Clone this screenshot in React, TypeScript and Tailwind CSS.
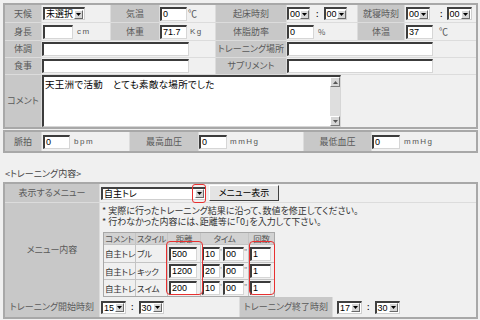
import React from "react";

const FONT = "font-['Noto_Sans_CJK_JP','Noto_Sans',sans-serif] [font-feature-settings:'palt']";

function Arrow() {
  return (
    <span className="w-[9px] h-[9px] bg-[#d6d6d6] border border-t-white border-l-white border-b-[#6a6a6a] border-r-[#6a6a6a] flex items-center justify-center shrink-0">
      <svg width="5" height="3" viewBox="0 0 5 3">
        <path d="M0 0H5L2.5 3Z" fill="#000" />
      </svg>
    </span>
  );
}

function Sel({ w, v, num = true }: { w: string; v: string; num?: boolean }) {
  return (
    <div className={`h-[13px] bg-white border-t-2 border-l-2 border-t-[#404040] border-l-[#404040] border-b border-r border-b-[#cfcfcf] border-r-[#cfcfcf] flex items-center pr-px shrink-0 ${w}`}>
      <span className={`flex-1 pl-px leading-[10px] text-black whitespace-nowrap ${num ? "text-[9px] font-['Liberation_Sans',sans-serif]" : "text-[9px]"}`}>{v}</span>
      <Arrow />
    </div>
  );
}

function Inp({ w, v = "" }: { w: string; v?: string }) {
  return (
    <div className={`h-[14px] ${w} bg-white border-t-2 border-l-2 border-t-[#3c3c3c] border-l-[#3c3c3c] border-b border-r border-b-[#d6d6d6] border-r-[#d6d6d6] text-[9px] leading-[11px] pl-px text-black font-['Liberation_Sans',sans-serif] shrink-0`}>
      {v}
    </div>
  );
}

const L = "bg-[#c8c8c8] text-[#5a5a5a] text-[9px] flex items-center justify-center whitespace-nowrap";
const V = "bg-[#f0f0f0] flex items-center";

function Unit({ t, cls = "ml-[4px]" }: { t: string; cls?: string }) {
  return <span className={`text-[8px] text-[#555] tracking-[1.5px] font-['Liberation_Sans',sans-serif] ${cls}`}>{t}</span>;
}

export default function App() {
  return (
    <div className={`w-[480px] h-[320px] bg-[#f0f0f0] pt-[3px] px-[3px] ${FONT}`}>
      {/* top table */}
      <div className="w-[475px] border-2 border-[#a8a8a8] bg-[#dcdcdc] grid grid-cols-[36px_68px_48px_55px_70px_70px_46px_71px] grid-rows-[17px_17px_16px_16px_52px] gap-px">
        <div className={L}>天候</div>
        <div className={`${V} pl-px`}><Sel w="w-[42px]" v="未選択" num={false} /></div>
        <div className={L}>気温</div>
        <div className={V}><Inp w="w-[27px]" v="0" /><span className="text-[9px] text-[#555] ml-px">℃</span></div>
        <div className={L}>起床時刻</div>
        <div className={V}><Sel w="w-[23px]" v="00" /><span className="text-[9px] ml-[6px] mr-[5px]">:</span><Sel w="w-[23px]" v="00" /></div>
        <div className={L}>就寝時刻</div>
        <div className={`${V} pl-px`}><Sel w="w-[24px]" v="00" /><span className="text-[9px] mr-[4px] ml-[10px]">:</span><Sel w="w-[25px]" v="00" /></div>

        <div className={L}>身長</div>
        <div className={`${V} pl-px`}><Inp w="w-[30px]" /><Unit t="cm" /></div>
        <div className={L}>体重</div>
        <div className={V}><Inp w="w-[27px]" v="71.7" /><Unit t="Kg" cls="ml-[3px]" /></div>
        <div className={L}>体脂肪率</div>
        <div className={V}><Inp w="w-[27px]" v="0" /><span className="text-[8px] text-[#555] ml-[4px]">%</span></div>
        <div className={L}>体温</div>
        <div className={`${V} pl-px`}><Inp w="w-[27px]" v="37" /><span className="text-[9px] text-[#555] ml-[6px]">℃</span></div>

        <div className={L}>体調</div>
        <div className={`${V} col-span-3`}><Inp w="w-[147px]" /></div>
        <div className={L}>トレーニング場所</div>
        <div className={`${V} col-span-3`}><Inp w="w-[146px]" /></div>

        <div className={L}>食事</div>
        <div className={`${V} col-span-3`}><Inp w="w-[147px]" /></div>
        <div className={L}>サプリメント</div>
        <div className={`${V} col-span-3`}><Inp w="w-[146px]" /></div>

        <div className={L}>コメント</div>
        <div className={`${V} col-span-7 items-stretch`}>
          <div className="w-[299px] bg-white border-t-2 border-l-2 border-t-[#3c3c3c] border-l-[#3c3c3c] border-b border-r border-b-[#d6d6d6] border-r-[#d6d6d6] flex">
            <div className="flex-1 text-[9.5px] leading-[12px] pl-[1px] pt-[1px] text-black tracking-[0.3px]">天王洲で活動　とても素敵な場所でした</div>
            <div className="w-[10px] bg-[#dedede] flex flex-col justify-between">
              <div className="h-[10px] bg-[#d6d6d6] border border-t-white border-l-white border-b-[#7a7a7a] border-r-[#7a7a7a] flex items-center justify-center">
                <svg width="5" height="3" viewBox="0 0 5 3"><path d="M0 3H5L2.5 0Z" fill="#555" /></svg>
              </div>
              <div className="h-[10px] bg-[#d6d6d6] border border-t-white border-l-white border-b-[#7a7a7a] border-r-[#7a7a7a] flex items-center justify-center">
                <svg width="5" height="3" viewBox="0 0 5 3"><path d="M0 0H5L2.5 3Z" fill="#555" /></svg>
              </div>
            </div>
          </div>
        </div>
      </div>

      {/* pulse row */}
      <div className="mt-[1px] w-[475px] border-2 border-[#a8a8a8] bg-[#dcdcdc] grid grid-cols-[36px_87px_68px_104px_67px_104px] grid-rows-[19px] gap-px">
        <div className={L}>脈拍</div>
        <div className={`${V} pl-px`}><Inp w="w-[27px]" v="0" /><Unit t="bpm" cls="ml-[4px] tracking-[0.5px]" /></div>
        <div className={L}>最高血圧</div>
        <div className={V}><Inp w="w-[28px]" v="0" /><Unit t="mmHg" cls="ml-[3px] tracking-[0.8px]" /></div>
        <div className={L}>最低血圧</div>
        <div className={V}><Inp w="w-[28px]" v="0" /><Unit t="mmHg" cls="ml-[4px] tracking-[0.8px]" /></div>
      </div>

      <div className="mt-[14px] ml-[2px] h-[13px] text-[9px] leading-[13px] text-[#444]">&lt;トレーニング内容&gt;</div>

      {/* training table */}
      <div className="mt-[2px] w-[475px] border-2 border-[#a8a8a8] bg-[#dcdcdc] flex flex-col gap-px">
        <div className="grid grid-cols-[94px_376px] h-[18px] gap-px">
          <div className={L}>表示するメニュー</div>
          <div className={`${V} pl-px`}>
            <div className="relative">
              <Sel w="w-[105px]" v="自主トレ" num={false} />
              <div className="absolute left-[91px] top-[-3px] w-[14px] h-[19px] border border-[#e83030] rounded-[3px]" />
            </div>
            <div className="ml-[3px] h-[16px] w-[70px] bg-[#e4e4e4] border border-t-white border-l-white border-b-[#404040] border-r-[#404040] flex items-center justify-center text-[9px] text-black">メニュー表示</div>
          </div>
        </div>

        <div className="grid grid-cols-[94px_376px] h-[93px] gap-px">
          <div className={L}>メニュー内容</div>
          <div className="bg-[#f0f0f0] pl-[2px] pt-[2px]">
            <div className="text-[9px] leading-[11px] text-[#333]">* 実際に行ったトレーニング結果に沿って、数値を修正してください。</div>
            <div className="text-[9px] leading-[11px] text-[#333]">* 行わなかった内容には、距離等に「0」を入力して下さい。</div>
            <div className="relative mt-[5px] ml-px w-[172px] border border-[#a8a8a8] bg-[#c4c4c4] grid grid-cols-[31px_31px_32px_47px_25px] grid-rows-[11px_17px_16px_16px] gap-px">
              {["コメント", "スタイル", "距離", "タイム", "回数"].map((h) => (
                <div key={h} className="bg-[#d2d2d2] text-[#555] text-[8.5px] leading-[11px] flex items-center justify-center whitespace-nowrap tracking-[-0.3px]">{h}</div>
              ))}
              {[
                ["ブル", "500", "10"],
                ["キック", "1200", "20"],
                ["スイム", "200", "10"],
              ].map(([s, d, t]) => (
                <React.Fragment key={s}>
                  <div className="bg-[#f0f0f0] text-[8.5px] text-[#333] flex items-center pl-px whitespace-nowrap tracking-[-0.2px]">自主トレ</div>
                  <div className="bg-[#f0f0f0] text-[8.5px] text-[#333] flex items-center pl-px whitespace-nowrap tracking-[-0.2px]">{s}</div>
                  <div className="bg-[#f0f0f0] flex items-center pl-[1px]"><Inp w="w-[28px]" v={d} /></div>
                  <div className="bg-[#f0f0f0] flex items-center pl-px">
                    <Inp w="w-[18px]" v={t} />
                    <span className="text-[7px] text-[#777] w-[3px] leading-none self-start mt-[3px]">'</span>
                    <Inp w="w-[21px]" v="00" />
                    <span className="text-[7px] text-[#777] leading-none self-start mt-[3px]">"</span>
                  </div>
                  <div className="bg-[#f0f0f0] flex items-center pl-px"><Inp w="w-[21px]" v="1" /></div>
                </React.Fragment>
              ))}
              <div className="absolute left-[62px] top-[8px] w-[37px] h-[54px] border border-[#e83030] rounded-[4px]" />
              <div className="absolute left-[145px] top-[8px] w-[26px] h-[54px] border border-[#e83030] rounded-[4px]" />
            </div>
          </div>
        </div>

        <div className="grid grid-cols-[94px_139px_92px_143px] h-[20px] gap-px">
          <div className={L}>トレーニング開始時刻</div>
          <div className={`${V} pl-px`}><Sel w="w-[25px]" v="15" /><span className="text-[9px] mx-[5px]">:</span><Sel w="w-[25px]" v="30" /></div>
          <div className={L}>トレーニング終了時刻</div>
          <div className={`${V} pl-[4px]`}><Sel w="w-[25px]" v="17" /><span className="text-[9px] mx-[5px]">:</span><Sel w="w-[25px]" v="30" /></div>
        </div>
      </div>
    </div>
  );
}
